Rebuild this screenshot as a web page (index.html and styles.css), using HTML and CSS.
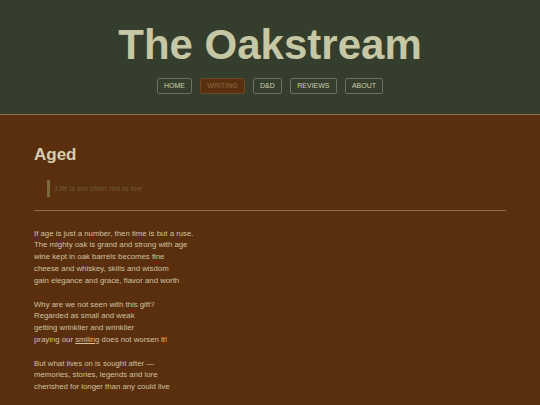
FILE: index.html
```html
<!DOCTYPE html>
<html lang="en">
<head>
<meta charset="utf-8">
<title>The Oakstream</title>
<link rel="stylesheet" href="styles.css">
</head>
<body>
<header class="site-header">
  <h1 class="site-title">The Oakstream</h1>
  <nav class="nav">
    <a class="nav-btn" href="#">HOME</a>
    <a class="nav-btn nav-btn-active" href="#">WRITING</a>
    <a class="nav-btn" href="#">D&amp;D</a>
    <a class="nav-btn" href="#">REVIEWS</a>
    <a class="nav-btn" href="#">ABOUT</a>
  </nav>
</header>
<main class="content">
  <h2 class="post-title">Aged</h2>
  <blockquote class="epigraph">Life is too short not to live</blockquote>
  <hr class="rule">
  <p class="stanza">If age is just a number, then time is but a ruse.<br>
  The mighty oak is grand and strong with age<br>
  wine kept in oak barrels becomes fine<br>
  cheese and whiskey, skills and wisdom<br>
  gain elegance and grace, flavor and worth</p>
  <p class="stanza">Why are we not seen with this gift?<br>
  Regarded as small and weak<br>
  getting wrinklier and wrinklier<br>
  praying our <a class="inline-link" href="#">smiling</a> does not worsen it!</p>
  <p class="stanza">But what lives on is sought after —<br>
  memories, stories, legends and lore<br>
  cherished for longer than any could live</p>
</main>
</body>
</html>
```
FILE: styles.css
```css
html, body {
  margin: 0;
  padding: 0;
}
body {
  background: #5a2f0e;
  font-family: "Liberation Sans", Arial, sans-serif;
  color: #d0c2a2;
}
.site-header {
  background: #353d2c;
  padding: 21px 0 20px;
  border-bottom: 1px solid #8e6e46;
  text-align: center;
}
.site-title {
  margin: 0;
  font-size: 42px;
  font-weight: bold;
  line-height: normal;
  color: #c5c7a5;
}
.nav {
  margin-top: 9px;
  display: flex;
  justify-content: center;
  gap: 8.4px;
}
.nav-btn {
  display: block;
  font-size: 7px;
  line-height: 8px;
  padding: 3px 6px;
  border: 1px solid #6a715c;
  border-radius: 2px;
  color: #cfd1b2;
  text-decoration: none;
}
.nav-btn-active {
  background: #5a2f0e;
  border-color: #6a4a26;
  color: #8e6a44;
}
.content {
  padding: 0 34px;
}
.post-title {
  margin: 30px 0 0;
  font-size: 17px;
  font-weight: bold;
  line-height: normal;
  color: #d6cdb0;
}
.epigraph {
  margin: 15px 0 0 13px;
  padding: 2.5px 0 2.5px 5px;
  border-left: 3px solid #7a6a3a;
  font-style: italic;
  font-size: 7.7px;
  line-height: 11.7px;
  color: #6e5c3e;
}
.rule {
  margin: 13px 0 0;
  border: 0;
  border-top: 1px solid #8a7048;
  height: 0;
}
.stanza {
  margin: 17px 0 0;
  font-size: 7.8px;
  line-height: 11.7px;
}
.stanza + .stanza {
  margin-top: 12.3px;
}
.inline-link {
  color: inherit;
  text-decoration: underline;
}
```
